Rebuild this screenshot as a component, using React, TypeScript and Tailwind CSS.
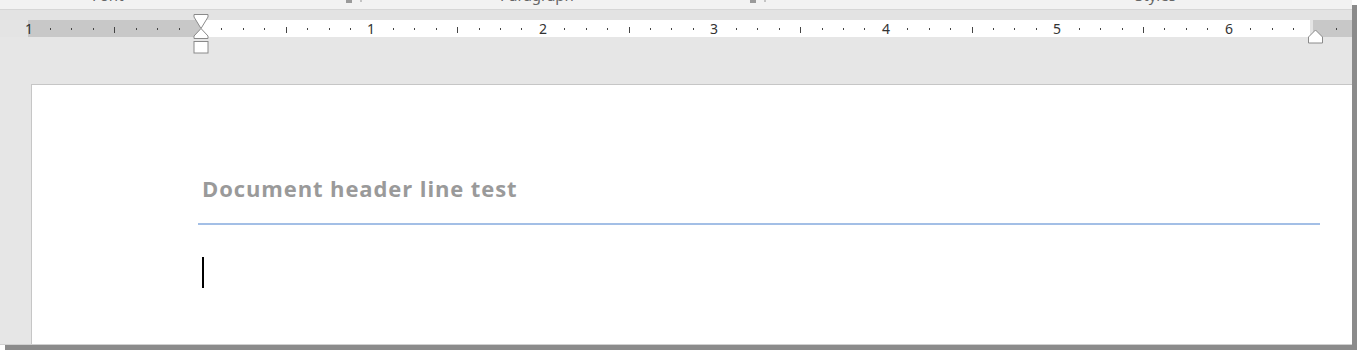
import type { FC } from "react";

const INCH = 171.45;
const ZERO = 200;

const ticks: { x: number; kind: "dot" | "half" | "num"; label?: number }[] = [];
for (let i = -8; i <= 53; i++) {
  const x = ZERO + (i * INCH) / 8;
  if (i === 0 || i === 52) continue;
  if (i % 8 === 0) ticks.push({ x, kind: "num", label: Math.abs(i / 8) });
  else if (i % 4 === 0) ticks.push({ x, kind: "half" });
  else ticks.push({ x, kind: "dot" });
}

const Ruler: FC = () => {
  return (
    <div className="relative h-[17px] flex bg-[#e4e4e4]">
      <div className="w-[28px]" />
      <div className="w-[172px] bg-[#c8c8c8]" />
      <div className="w-[1110px] bg-white" />
      <div className="w-[3px]" />
      <div className="flex-1 bg-[#c8c8c8]" />

      <svg
        className="absolute left-0 top-0 pointer-events-none"
        width="1352"
        height="17"
        viewBox="0 0 1352 17"
      >
        {ticks
          .filter((t) => t.kind !== "num")
          .map((t) =>
            t.kind === "dot" ? (
              <rect key={t.x} x={Math.round(t.x)} y={8} width={1} height={2} fill="#444" />
            ) : (
              <rect key={t.x} x={Math.round(t.x)} y={7} width={1} height={6} fill="#444" />
            )
          )}
      </svg>

      {ticks
        .filter((t) => t.kind === "num")
        .map((t) => (
          <span
            key={t.x}
            className="absolute top-0 w-[14px] -ml-[7px] text-center text-[14px] leading-[17px] text-[#333] font-['Noto_Sans',sans-serif]"
            style={{ left: Math.round(t.x) }}
          >
            {t.label}
          </span>
        ))}
    </div>
  );
};

const App: FC = () => {
  return (
    <div className="w-[1357px] h-[350px] bg-white overflow-hidden font-['Liberation_Sans',sans-serif]">
      <div className="relative w-[1352px] h-[345px] flex flex-col bg-[#e6e6e6] shadow-[5px_5px_0_#8b8b8b]">
        {/* ribbon group labels, only their lower edge is in view */}
        <div className="h-[10px] flex bg-[#f2f2f2] border-b border-[#d6d6d6] overflow-hidden text-[15px] leading-[16px] text-[#666] font-['Noto_Sans',sans-serif]">
          <div className="w-[92px] shrink-0" />
          <div className="w-[44px] shrink-0 -mt-[13px]">Font</div>
          <div className="w-[210px] shrink-0" />
          <div className="w-[6px] h-[3px] shrink-0 bg-[#9a9a9a]" />
          <div className="w-[8px] shrink-0" />
          <div className="w-[2px] h-[2px] shrink-0 bg-[#c4c4c4]" />
          <div className="w-[138px] shrink-0" />
          <div className="w-[100px] shrink-0 -mt-[13px]">Paragraph</div>
          <div className="w-[150px] shrink-0" />
          <div className="w-[6px] h-[3px] shrink-0 bg-[#9a9a9a]" />
          <div className="w-[8px] shrink-0" />
          <div className="w-[2px] h-[2px] shrink-0 bg-[#c4c4c4]" />
          <div className="w-[369px] shrink-0" />
          <div className="w-[60px] shrink-0 -mt-[13px]">Styles</div>
        </div>
        <div className="h-[10px] bg-[#e3e3e3]" />

        <Ruler />

        <svg className="absolute left-[193px] top-[14px]" width="16" height="40" viewBox="0 0 16 40">
          <path
            d="M1 0.5 H15 V3 L8 14.5 L15 22 V24.5 H1 V22 L8 14.5 L1 3 Z"
            fill="#fff"
            stroke="#8a8a8a"
          />
          <rect x="1" y="27.5" width="14" height="11.5" fill="#fff" stroke="#8a8a8a" />
        </svg>
        <svg className="absolute left-[1307px] top-[29px]" width="17" height="15" viewBox="0 0 17 15">
          <path d="M8.5 1 L1.5 8 V14 H15.5 V8 Z" fill="#fff" stroke="#8a8a8a" />
        </svg>

        <div className="flex-1 pl-[31px] pt-[47px] flex border-b border-[#d0d0d0]">
          <div className="flex-1 bg-white border-l border-t border-[#c6c6c6] pl-[166px] pr-[32px] pt-[90px]">
            <div className="pl-[4px] text-[22px] leading-[26px] font-bold text-[#9a9a9a] font-['Open_Sans',sans-serif] tracking-[0.9px]">
              Document header line test
            </div>
            <div className="mt-[22px] h-[1.5px] bg-[#a3bfe6]" />
            <div className="ml-[4px] mt-[32px] w-[1.5px] h-[31px] bg-black" />
          </div>
        </div>
      </div>
    </div>
  );
};

export default App;
